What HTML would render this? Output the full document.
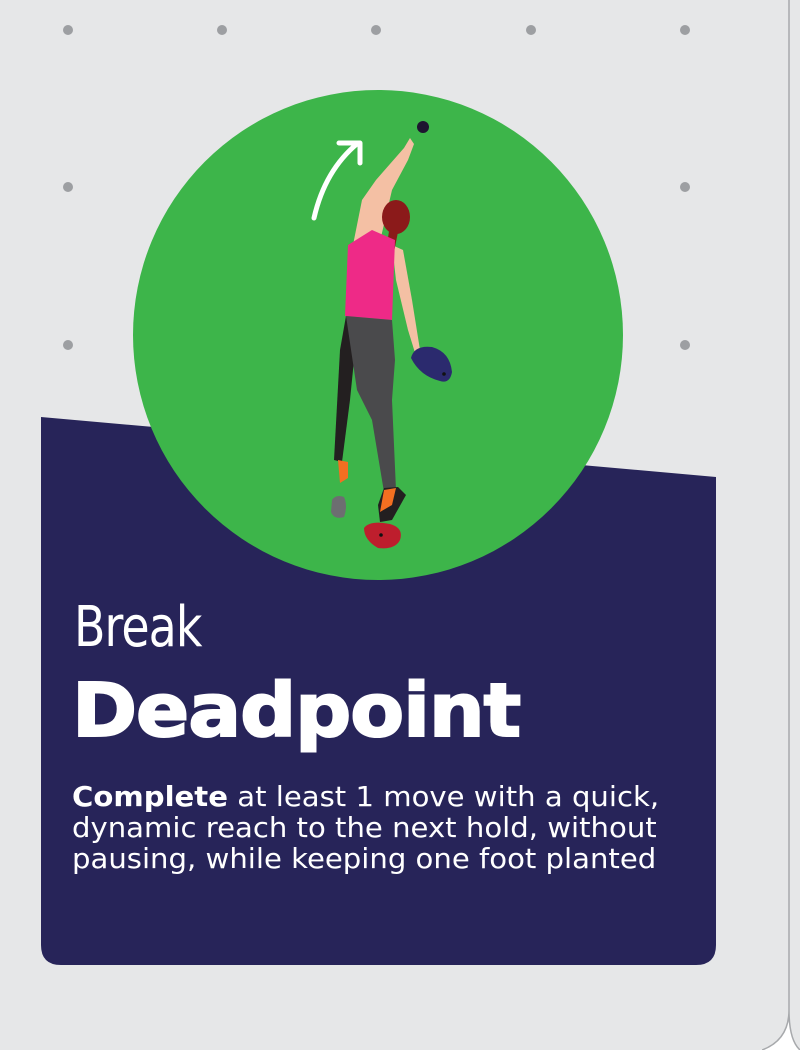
<!DOCTYPE html>
<html><head><meta charset="utf-8"><style>
html,body{margin:0;padding:0}
body{width:800px;height:1050px;background:#fff;position:relative;overflow:hidden;font-family:"Liberation Sans",sans-serif}
.bg{position:absolute;left:0;top:0;width:800px;height:1050px}
.t1{position:absolute;left:74px;top:600px;color:#fff;font-family:"DejaVu Sans Condensed","Liberation Sans Narrow","Liberation Sans",sans-serif;font-weight:200;font-size:56px;transform:scaleX(.91);transform-origin:left;line-height:56px;letter-spacing:-1px;white-space:nowrap}
.t2{position:absolute;left:72px;top:674px;color:#fff;font-family:"DejaVu Sans","Liberation Sans",sans-serif;font-weight:900;font-size:74px;line-height:74px;letter-spacing:-1px;-webkit-text-stroke:2px #fff;transform:scaleX(1.06);transform-origin:left;white-space:nowrap}
.body{position:absolute;left:72px;top:781px;color:#fff;font-family:"DejaVu Sans","Verdana",sans-serif;font-size:28px;line-height:31px;white-space:nowrap;transform:scaleX(1.04);transform-origin:left}
</style></head><body>
<svg class="bg" viewBox="0 0 800 1050" xmlns="http://www.w3.org/2000/svg">
<path d="M0 0H789V1010Q789 1040 760 1050H0Z" fill="#e6e7e8"/>
<path d="M789 0V1010Q789 1040 800 1050V0Z" fill="#e6e7e8"/>
<path d="M789 0V1010Q789 1040 762 1050M789 1010Q789 1040 800 1050" stroke="#a7a9ac" stroke-width="1.5" fill="none"/>
<g fill="#9d9fa2">
<circle cx="68" cy="30" r="5"/><circle cx="222" cy="30" r="5"/><circle cx="376" cy="30" r="5"/><circle cx="531" cy="30" r="5"/><circle cx="685" cy="30" r="5"/>
<circle cx="68" cy="187" r="5"/><circle cx="685" cy="187" r="5"/>
<circle cx="68" cy="345" r="5"/><circle cx="685" cy="345" r="5"/>
</g>
<path d="M41 417L716 477V945Q716 965 696 965H61Q41 965 41 945Z" fill="#272459"/>
<circle cx="378" cy="335" r="245" fill="#3db54a"/>
<path d="M314 218Q325 170 358 143M339 143H360V163" stroke="#fff" stroke-width="5" fill="none" stroke-linecap="round" stroke-linejoin="round"/>
<circle cx="423" cy="127" r="6" fill="#1e1530"/>
<path d="M352 250L362 200L376 180L404 148L410 138L414 144L408 160L392 190L378 250Z" fill="#f4c0a4"/>
<path d="M392 245L403 250L412 300L420 350L416 356L408 330L396 280Z" fill="#f4c0a4"/>
<path d="M411 358Q414 345 432 347Q450 352 452 372Q450 384 440 381Q420 376 411 358Z" fill="#2b2a6e"/>
<circle cx="444" cy="374" r="1.8" fill="#111"/>
<ellipse cx="396" cy="217" rx="14" ry="17" fill="#8b1a1a"/>
<path d="M390 225L384 263L392 262L398 232Z" fill="#8b1a1a"/>
<path d="M348 245L372 230L395 240L392 320L345 316Z" fill="#ee2a87"/>
<path d="M346 316L340 350L334 460L342 462L350 400L356 340Z" fill="#231f20"/>
<path d="M346 316L392 320L395 360L392 400L396 490L384 492L372 420L357 390Z" fill="#4a4a4c"/>
<path d="M338 460L348 462L348 478L340 483Z" fill="#f36f21"/>
<path d="M384 488L398 487L406 495L392 520L380 522L378 505Z" fill="#231f20"/>
<path d="M384 490L396 488L392 505L380 512Z" fill="#f36f21"/>
<path d="M332 500Q336 494 344 497Q348 506 344 517Q334 520 331 512Z" fill="#6d6e71"/>
<path d="M364 528Q370 520 390 524Q404 528 400 540Q395 550 378 548Q364 540 364 528Z" fill="#be1e2d"/>
<circle cx="381" cy="535" r="1.8" fill="#111"/>
</svg>
<div class="t1">Break</div>
<div class="t2">Deadpoint</div>
<div class="body"><b>Complete</b> at least 1 move with a quick,<br>dynamic reach to the next hold, without<br>pausing, while keeping one foot planted</div>
</body></html>
